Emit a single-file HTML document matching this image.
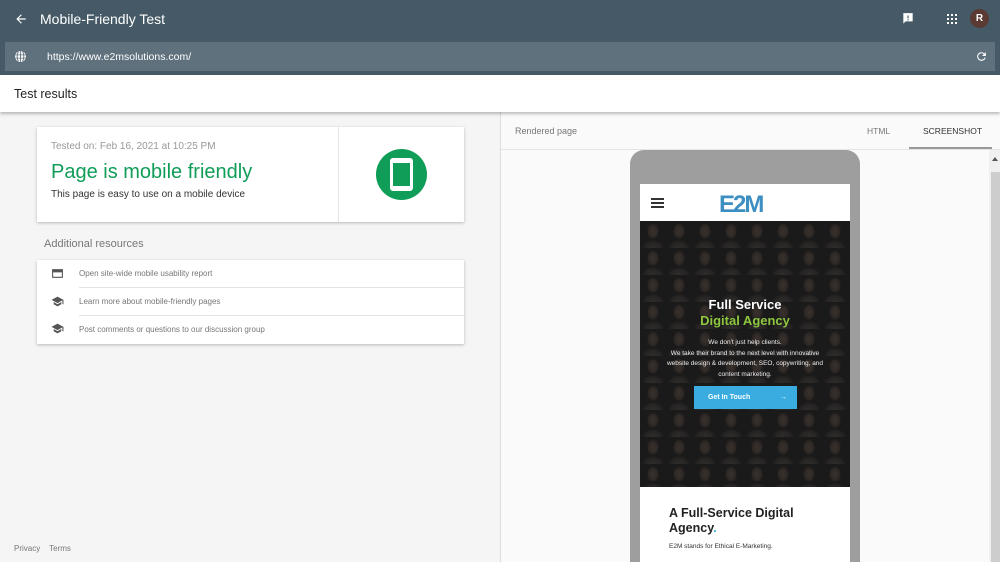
<!DOCTYPE html>
<html><head><style>
*{margin:0;padding:0;box-sizing:border-box}
html,body{width:1000px;height:562px;overflow:hidden}
body{background:#f5f5f5;font-family:"Liberation Sans",sans-serif;position:relative}
.hdr{position:absolute;left:0;top:0;width:1000px;height:75px;background:#455a66}
.ttl{position:absolute;left:40px;top:11px;color:#fff;font-size:14px}
.url{position:absolute;left:5px;top:42px;width:990px;height:29px;background:#5f717d}
.url span{position:absolute;left:42px;top:9px;color:#fff;font-size:10.5px}
.tr{position:absolute;left:0;top:75px;width:1000px;height:37px;background:#fff;box-shadow:0 2px 3px rgba(0,0,0,.25);z-index:2}
.tr span{position:absolute;left:14px;top:12px;font-size:12.5px;color:#222}
.card{position:absolute;background:#fff;box-shadow:0 1px 3px rgba(0,0,0,.25)}
.right{position:absolute;left:500px;top:112px;width:500px;height:450px;background:#fafafa;border-left:1px solid #ddd;overflow:hidden}
.item{position:absolute;left:42px;font-size:8px;color:#777}
.sep{position:absolute;left:42px;right:0;height:1px;background:#e3e3e3}
.ph{position:absolute;left:129px;top:38px;width:230px;height:460px;background:#9e9e9e;border-radius:14px}
.scr{position:absolute;left:10px;top:34px;width:210px;height:420px;background:#fff;overflow:hidden}
.photo{position:absolute;left:0;top:37px;width:210px;height:266px;background-color:#262424;
background-image:radial-gradient(ellipse 6px 8px at 50% 38%,#5a4c44 0,#4a3f39 70%,transparent 100%),radial-gradient(ellipse 11px 8px at 50% 100%,#4a4644 0,#3a3735 70%,transparent 100%);
background-size:26px 27px}
.photo:after{content:"";position:absolute;inset:0;background:rgba(15,15,15,.45)}
.wf{position:absolute;width:100%;text-align:center;font-weight:bold;z-index:1}
</style></head><body>
<div class="hdr">
<svg style="position:absolute;left:14px;top:12px" width="14" height="14" viewBox="0 0 24 24"><path d="M20 11H7.8l5.6-5.6L12 4l-8 8 8 8 1.4-1.4L7.8 13H20z" fill="#fff"/></svg>
<div class="ttl">Mobile-Friendly Test</div>
<svg style="position:absolute;left:901px;top:12px" width="14" height="14" viewBox="0 0 24 24"><path d="M20 2H4v18l4-4h12z" fill="#fff"/><rect x="11" y="6" width="2" height="5" fill="#455a66"/><rect x="11" y="12.5" width="2" height="2" fill="#455a66"/></svg>
<svg style="position:absolute;left:946px;top:13px" width="12" height="12" viewBox="0 0 12 12" fill="#fff"><rect x="1" y="1" width="2" height="2"/><rect x="5" y="1" width="2" height="2"/><rect x="9" y="1" width="2" height="2"/><rect x="1" y="5" width="2" height="2"/><rect x="5" y="5" width="2" height="2"/><rect x="9" y="5" width="2" height="2"/><rect x="1" y="9" width="2" height="2"/><rect x="5" y="9" width="2" height="2"/><rect x="9" y="9" width="2" height="2"/></svg>
<div style="position:absolute;left:970px;top:9px;width:19px;height:19px;border-radius:50%;background:#5b3a33;color:#fff;font-size:10px;font-weight:bold;text-align:center;line-height:19px">R</div>
<div class="url"><svg style="position:absolute;left:9px;top:8px" width="13" height="13" viewBox="0 0 24 24"><circle cx="12" cy="12" r="10" fill="#fff"/><path d="M2 9h20M2 15h20M12 2v20M8 3c-3 6-3 12 0 18M16 3c3 6 3 12 0 18" stroke="#5f717d" stroke-width="1.6" fill="none"/></svg><span>https://www.e2msolutions.com/</span>
<svg style="position:absolute;left:970px;top:8px" width="13" height="13" viewBox="0 0 24 24"><path d="M17.6 6.4A8 8 0 1 0 19.7 14h-2.1a6 6 0 1 1-1.4-6.2L13 11h7V4z" fill="#fff"/></svg></div>
</div>
<div class="tr"><span>Test results</span></div>

<div class="card" style="left:37px;top:127px;width:427px;height:95px">
<div style="position:absolute;left:14px;top:14px;font-size:10px;color:#999">Tested on: Feb 16, 2021 at 10:25 PM</div>
<div style="position:absolute;left:14px;top:34px;font-size:20px;color:#0f9d58">Page is mobile friendly</div>
<div style="position:absolute;left:14px;top:62px;font-size:10px;color:#333">This page is easy to use on a mobile device</div>
<div style="position:absolute;left:301px;top:0;width:1px;height:95px;background:#e5e5e5"></div>
<div style="position:absolute;left:339px;top:22px;width:51px;height:51px;border-radius:50%;background:#0f9d58"></div>
<div style="position:absolute;left:353px;top:31px;width:23px;height:33px;border:2px solid #fff;border-radius:3px;background:#fff"><div style="margin:3px 1px;height:23px;background:#0f9d58"></div></div>
</div>
<div style="position:absolute;left:44px;top:238px;font-size:11px;color:#777">Additional resources</div>
<div class="card" style="left:37px;top:260px;width:427px;height:84px">
<svg style="position:absolute;left:14px;top:7px" width="13" height="13" viewBox="0 0 24 24"><path d="M2 4h20v16H2z M4 10h16v8H4z" fill="#555" fill-rule="evenodd"/></svg>
<div class="item" style="top:9px">Open site-wide mobile usability report</div>
<div class="sep" style="top:27px"></div>
<svg style="position:absolute;left:14px;top:35px" width="13" height="13" viewBox="0 0 24 24"><path d="M12 3L1 9l11 6 9-5v7h2V9z M5 13v4l7 4 7-4v-4l-7 4z" fill="#555"/></svg>
<div class="item" style="top:37px">Learn more about mobile-friendly pages</div>
<div class="sep" style="top:55px"></div>
<svg style="position:absolute;left:14px;top:62px" width="13" height="13" viewBox="0 0 24 24"><path d="M12 3L1 9l11 6 9-5v7h2V9z M5 13v4l7 4 7-4v-4l-7 4z" fill="#555"/></svg>
<div class="item" style="top:65px">Post comments or questions to our discussion group</div>
</div>
<div style="position:absolute;left:14px;top:544px;font-size:8px;color:#777">Privacy&nbsp;&nbsp;&nbsp;&nbsp;Terms</div>

<div class="right">
<div style="position:absolute;left:14px;top:14px;font-size:9px;color:#777">Rendered page</div>
<div style="position:absolute;left:366px;top:14px;font-size:8.5px;color:#777">HTML</div>
<div style="position:absolute;left:422px;top:14px;font-size:8.5px;color:#333">SCREENSHOT</div>
<div style="position:absolute;left:408px;top:35px;width:83px;height:2px;background:#999"></div>
<div style="position:absolute;left:0;top:37px;width:500px;height:1px;background:#e5e5e5"></div>
<div style="position:absolute;left:488px;top:38px;width:12px;height:412px;background:#f0f0f0"></div>
<div style="position:absolute;left:490px;top:60px;width:9px;height:390px;background:#cdcdcd"></div>
<div style="position:absolute;left:491px;top:42px;width:0;height:0;border:3px solid transparent;border-bottom:4px solid #555"></div>
<div class="ph"><div class="scr">
<div style="position:absolute;left:11px;top:14px;width:13px;height:2px;background:#333;box-shadow:0 4px 0 #333,0 8px 0 #333"></div>
<div style="position:absolute;left:79px;top:7px;font:bold 24px 'Liberation Sans',sans-serif;color:#3d8fc2;letter-spacing:-2px">E2M</div>
<div class="photo"></div>
<div class="wf" style="top:113px;font-size:13px;color:#fff">Full Service</div>
<div class="wf" style="top:129px;font-size:13px;color:#8dc63f">Digital Agency</div>
<div class="wf" style="top:154px;font-size:6.5px;color:#eee;font-weight:normal;line-height:10.5px">We don't just help clients.<br>We take their brand to the next level with innovative<br>website design &amp; development, SEO, copywriting, and<br>content marketing.</div>
<div style="position:absolute;left:54px;top:202px;width:103px;height:23px;background:#3aace0;color:#fff;font-size:7px;font-weight:bold;line-height:23px;padding-left:14px;z-index:1">Get In Touch<span style="position:absolute;right:10px;font-weight:normal">→</span></div>
<div style="position:absolute;left:29px;top:322px;font-size:12.5px;font-weight:bold;color:#222;line-height:15px">A Full-Service Digital<br>Agency<span style="color:#3aace0">.</span></div>
<div style="position:absolute;left:29px;top:359px;font-size:6.5px;color:#333">E2M stands for Ethical E-Marketing.</div>
</div></div>
</div>
</body></html>
